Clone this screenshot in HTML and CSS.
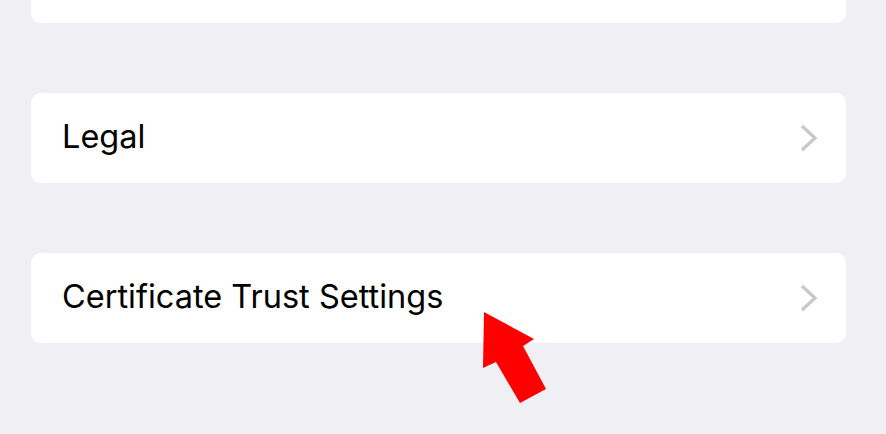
FILE: index.html
```html
<!DOCTYPE html>
<html lang="en">
<head>
  <meta charset="UTF-8" />
  <title>Settings</title>
  <link rel="stylesheet" href="styles.css">
</head>
<body>
  <div class="list">
    <div class="group groupTop"></div>

    <div class="group">
      <div class="row">
        <span class="label">Legal</span>
        <svg class="chevron" width="18" height="28" viewBox="0 0 18 28"><path d="M2 2 L15 14 L2 26" /></svg>
      </div>
    </div>

    <div class="group">
      <div class="row">
        <span class="label">Certificate Trust Settings</span>
        <svg class="chevron" width="18" height="28" viewBox="0 0 18 28"><path d="M2 2 L15 14 L2 26" /></svg>
      </div>
    </div>
  </div>

  <!-- pointer arrow drawn over the list -->
  <svg class="arrow" width="886" height="434" viewBox="0 0 886 434">
    <polygon points="484,312 534,339 523,346 546,389 520,403 496,362 483,368" />
  </svg>
</body>
</html>
```

FILE: styles.css
```css
body {
  margin: 0;
  background: #efeff4;
  font-family: "Inter", "Liberation Sans", sans-serif;
  width: 886px;
  height: 434px;
  overflow: hidden;
  position: relative;
}
.list {
  padding: 0 40px 0 31px;
  display: flex;
  flex-direction: column;
  gap: 70px;
}
.group {
  background: #fff;
  border-radius: 10px;
}
.groupTop {
  height: 23px;
  border-radius: 0 0 10px 10px;
}
.row {
  height: 90px;
  display: flex;
  align-items: center;
  justify-content: space-between;
  padding: 0 28px 0 31px;
}
.label {
  font-size: 32.5px;
  color: #000;
  margin-top: -3px;
}
.chevron path {
  fill: none;
  stroke: #c7c7cc;
  stroke-width: 3.2;
}
.arrow {
  position: absolute;
  left: 0;
  top: 0;
}
.arrow polygon {
  fill: #ff0000;
}
```
